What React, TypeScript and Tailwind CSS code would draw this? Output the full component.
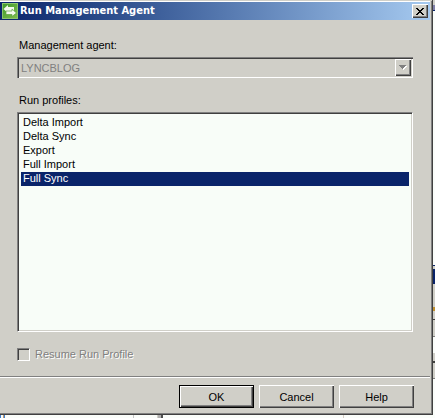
import { useState } from 'react';

const PROFILES = ['Delta Import', 'Delta Sync', 'Export', 'Full Import', 'Full Sync'];

function AgentIcon() {
  return (
    <svg width="16" height="16" viewBox="0 0 16 16" className="shrink-0" aria-hidden="true">
      <defs>
        <linearGradient id="agent-green" x1="0" y1="0" x2="1" y2="1">
          <stop offset="0" stopColor="#3f9a2c" />
          <stop offset="1" stopColor="#7fbd4c" />
        </linearGradient>
      </defs>
      <rect x="0.5" y="0.5" width="15" height="15" fill="url(#agent-green)" stroke="#8cc46c" />
      <path d="M1.5 6 L6 2 V4 H12 V8 H6 V10 Z" fill="#f4fbee" />
      <path d="M14.5 10 L10 6 V8 H4 V11.5 H10 V13.5 Z" fill="#f4fbee" stroke="#5ba03c" strokeWidth="0.7" />
    </svg>
  );
}

interface DialogButtonProps {
  label: string;
  isDefault?: boolean;
}

function DialogButton({ label, isDefault = false }: DialogButtonProps) {
  return (
    <button
      type="button"
      className={
        isDefault
          ? 'h-[23px] w-[75px] border border-black bg-[#d0cfc8] shadow-[inset_1px_1px_0_#fff,inset_-1px_-1px_0_#404040,inset_-2px_-2px_0_#808080]'
          : 'h-[23px] w-[75px] bg-[#d0cfc8] shadow-[inset_1px_1px_0_#fff,inset_-1px_-1px_0_#404040,inset_-2px_-2px_0_#808080]'
      }
    >
      {label}
    </button>
  );
}

export default function App() {
  const [profile, setProfile] = useState('Full Sync');

  return (
    <div className="grid min-h-screen grid-cols-[1fr_2px] grid-rows-[auto_1fr] overflow-hidden bg-[#fafdfa] font-['Liberation_Sans',Arial,sans-serif] text-[11px] leading-[14px] text-black">
      <main className="border-r border-b border-[#404040] bg-[#d0cfc8] shadow-[inset_-1px_-1px_0_#808080]">
        {/* Title bar */}
        <div className="border-t border-[#d0cfc8] pr-[2px]">
          <header className="flex h-[19px] items-center gap-[2px] border-t border-white bg-linear-to-r from-[#0a246a] to-[#a6caf0] px-[2px]">
            <AgentIcon />
            <h1 className="grow font-['DejaVu_Sans_Condensed','DejaVu_Sans',sans-serif] text-[11px] font-bold text-white">
              Run Management Agent
            </h1>
            <button
              type="button"
              aria-label="Close"
              className="flex h-[14px] w-4 items-center justify-center bg-[#d0cfc8] shadow-[inset_1px_1px_0_#fff,inset_-1px_-1px_0_#404040,inset_-2px_-2px_0_#808080]"
            >
              <svg width="8" height="7" viewBox="0 0 8 7" shapeRendering="crispEdges" aria-hidden="true">
                <path
                  d="M0 0h2v1h-2zM6 0h2v1h-2zM1 1h2v1h-2zM5 1h2v1h-2zM2 2h4v1h-4zM3 3h2v1h-2zM2 4h4v1h-4zM1 5h2v1h-2zM5 5h2v1h-2zM0 6h2v1h-2zM6 6h2v1h-2z"
                  fill="#000"
                />
              </svg>
            </button>
          </header>
        </div>

        <div className="flex flex-col pt-[18px] pr-[19px] pl-[17px]">
          <label htmlFor="agent" className="pl-[2px]">
            Management agent:
          </label>
          <div className="mt-[5px] grid">
            <select
              id="agent"
              disabled
              className="col-start-1 row-start-1 h-[21px] w-full appearance-none border-t border-l border-[#808080] pl-[3px] text-[#808080] opacity-100 shadow-[inset_1px_1px_0_#404040,inset_-1px_-1px_0_#fff]"
            >
              <option>LYNCBLOG</option>
            </select>
            <span className="pointer-events-none col-start-1 row-start-1 mr-[2px] flex h-[17px] w-4 items-center justify-center self-center justify-self-end bg-[#d0cfc8] shadow-[inset_1px_1px_0_#fff,inset_-1px_-1px_0_#404040,inset_-2px_-2px_0_#808080]">
              <svg width="8" height="5" viewBox="0 0 8 5" shapeRendering="crispEdges" aria-hidden="true">
                <path d="M1 1h7v1h-1v1h-1v1h-1v1h-1v-1h-1v-1h-1v-1h-1z" fill="#fff" />
                <path d="M0 0h7v1h-1v1h-1v1h-1v1h-1v-1h-1v-1h-1v-1h-1z" fill="#808080" />
              </svg>
            </span>
          </div>

          <label htmlFor="profiles" className="mt-[15px] pl-[2px]">
            Run profiles:
          </label>
          <select
            id="profiles"
            size={15}
            value={profile}
            onChange={(e) => setProfile(e.target.value)}
            className="mt-[5px] h-[220px] overflow-hidden rounded-none border border-t-[#808080] border-r-white border-b-white border-l-[#808080] bg-[#f8fdf8] p-[3px] shadow-[inset_1px_1px_0_#404040,inset_-1px_-1px_0_#d0cfc8] outline-none"
          >
            {PROFILES.map((name) => (
              <option
                key={name}
                value={name}
                className="h-[14px] min-h-0 px-[2px] py-0 leading-[14px] checked:bg-[#0a246a] checked:bg-linear-to-r checked:from-[#0a246a] checked:to-[#0a246a] checked:[-webkit-text-fill-color:#fff]"
              >
                {name}
              </option>
            ))}
          </select>

          <label className="mt-[15px] flex items-center gap-[5px] text-[#808080] [text-shadow:1px_1px_0_#fff]">
            <input
              type="checkbox"
              disabled
              className="size-[13px] appearance-none border border-t-[#808080] border-r-white border-b-white border-l-[#808080] bg-[#d0cfc8] shadow-[inset_1px_1px_0_#404040]"
            />
            Resume Run Profile
          </label>
        </div>

        <footer className="mt-[15px] mr-[2px] flex justify-end gap-[5px] border-t border-[#808080] pt-[8px] pr-4 pb-[6px] shadow-[inset_0_1px_0_#fff]">
          <DialogButton label="OK" isDefault />
          <DialogButton label="Cancel" />
          <DialogButton label="Help" />
        </footer>
      </main>

      {/* Slivers of the windows behind the dialog */}
      <div className="flex flex-col" aria-hidden="true">
        <div className="h-[5px] bg-[#d0cfc8]" />
        <div className="h-[5px] bg-[#8080a8]" />
        <div className="h-px bg-[#0a246a]" />
        <div className="h-[254px]" />
        <div className="h-px bg-[#0a246a]" />
        <div className="h-[3px] bg-[#d0cfc8]" />
        <div className="h-[15px] bg-[#0a246a]" />
        <div className="h-[23px] bg-[#d0cfc8]" />
        <div className="h-[4px] bg-[#c09030]" />
        <div className="h-[8px] bg-[#d0cfc8]" />
        <div className="h-px bg-[#404040]" />
        <div className="h-4 bg-[#d0cfc8]" />
        <div className="h-px bg-[#808080]" />
        <div className="h-4" />
        <div className="h-[8px] bg-[#d0cfc8]" />
        <div className="h-[2px] bg-[#404040]" />
        <div className="h-[15px] bg-[#d0cfc8]" />
        <div className="h-px bg-[#808080]" />
      </div>
      <div className="col-span-2 flex" aria-hidden="true">
        <div className="w-px bg-[#3d80d0]" />
        <div className="w-[2px]" />
        <div className="w-px bg-[#c09870]" />
        <div className="w-px bg-[#3d80d0]" />
        <div className="w-[128px]" />
        <div className="w-px bg-[#c8c8c8]" />
        <div className="w-[23px]" />
        <div className="w-px bg-[#d0cfc8]" />
        <div className="w-[3px] bg-[#b0b0b0]" />
        <div className="w-[2px] bg-[#505050]" />
        <div className="w-[180px]" />
        <div className="w-px bg-[#d8d0c8]" />
      </div>
    </div>
  );
}
